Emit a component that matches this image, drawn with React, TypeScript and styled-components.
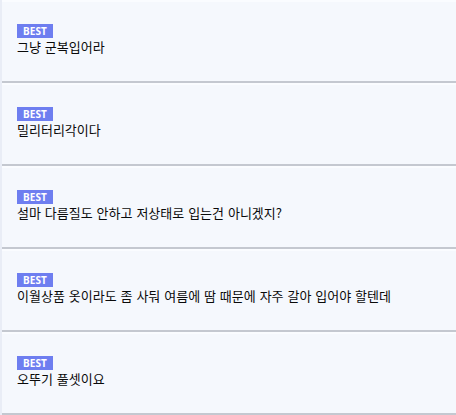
import React from "react";
import styled, { createGlobalStyle } from "styled-components";

const Global = createGlobalStyle`
  html, body { margin: 0; padding: 0; background: #f5f8fd; }
  body { font-family: "Noto Sans CJK KR", "Noto Sans", sans-serif; }
`;

const List = styled.ul`
  list-style: none;
  margin: 0;
  padding: 0;
  width: 456px;
  border-left: 2px solid #e9edf6;
  box-sizing: border-box;
`;

const Item = styled.li`
  box-sizing: border-box;
  height: 83px;
  padding: 24px 15px 0;
  background: #f5f8fd;
  border-bottom: 2px solid #c4c8d0;
  box-shadow: inset 0 2px 0 #fafcff;
  display: flex;
  flex-direction: column;
  align-items: flex-start;
`;

const Badge = styled.span`
  display: inline-flex;
  align-items: center;
  justify-content: center;
  width: 36px;
  height: 14px;
  background: #6e7ef0;
  color: #ffffff;
  font-family: "Noto Sans", "DejaVu Sans", sans-serif;
  font-weight: 700;
  font-size: 10px;
  letter-spacing: 0.1px;
`;

const Text = styled.div`
  margin-top: 0px;
  font-size: 13px;
  line-height: 17px;
  word-spacing: 1px;
  color: #0a0a0a;
`;

const items = [
  "그냥 군복입어라",
  "밀리터리각이다",
  "설마 다름질도 안하고 저상태로 입는건 아니겠지?",
  "이월상품 옷이라도 좀 사둬 여름에 땀 때문에 자주 갈아 입어야 할텐데",
  "오뚜기 풀셋이요",
];

export default function App() {
  return (
    <>
      <Global />
      <List>
        {items.map((t) => (
          <Item key={t}>
            <Badge>BEST</Badge>
            <Text>{t}</Text>
          </Item>
        ))}
      </List>
    </>
  );
}
